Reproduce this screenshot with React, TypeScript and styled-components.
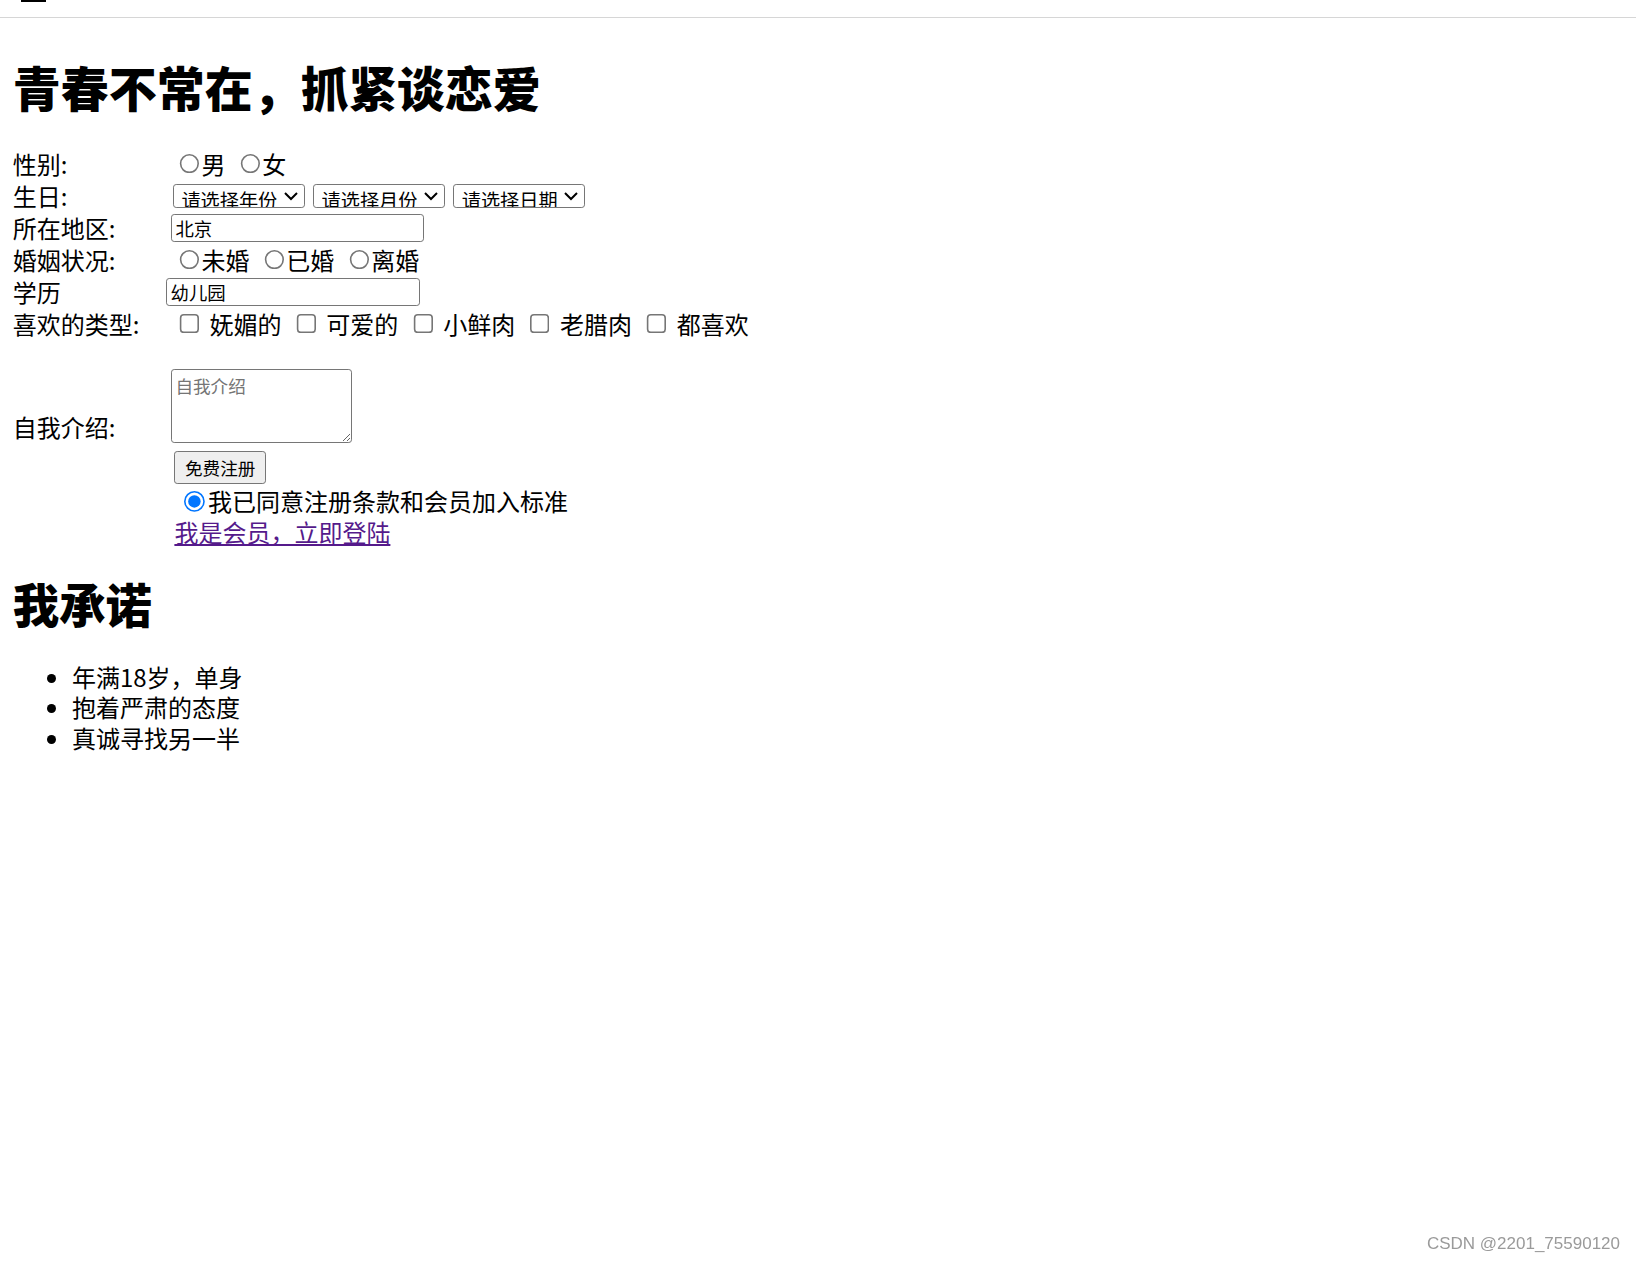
import styled, { createGlobalStyle } from "styled-components";

const GlobalStyle = createGlobalStyle`
  html, body { margin: 0; background: #fff; }
  body { font-family: "Noto Sans CJK SC", "Liberation Sans", sans-serif; color: #000; }
`;

export default function App() {
  return (
    <>
      <GlobalStyle />
      <Page>
        <TopBar />
        <Rule />
        <Title>青春不常在，抓紧谈恋爱</Title>
        <Form>
          <Row>
            <Label>性别:</Label>
            <Field>
              <input type="radio" name="sex" />男
              <input type="radio" name="sex" />女
            </Field>
          </Row>
          <Row>
            <Label>生日:</Label>
            <Field>
              <Select><option>请选择年份</option></Select>
              <Select><option>请选择月份</option></Select>
              <Select><option>请选择日期</option></Select>
            </Field>
          </Row>
          <Row>
            <Label>所在地区:</Label>
            <Field>
              <TextInput defaultValue="北京" />
            </Field>
          </Row>
          <Row>
            <Label>婚姻状况:</Label>
            <Field>
              <input type="radio" name="m" />未婚
              <input type="radio" name="m" />已婚
              <input type="radio" name="m" />离婚
            </Field>
          </Row>
          <Row>
            <Label>学历</Label>
            <Field $shift={-3}>
              <TextInput defaultValue="幼儿园" />
            </Field>
          </Row>
          <Row>
            <Label>喜欢的类型:</Label>
            <Field>
              {["妩媚的", "可爱的", "小鲜肉", "老腊肉", "都喜欢"].map((t) => (
                <Check key={t}>
                  <input type="checkbox" /> {t}
                </Check>
              ))}
            </Field>
          </Row>
          <IntroRow>
            <Label>自我介绍:</Label>
            <Field>
              <Intro placeholder="自我介绍" />
            </Field>
          </IntroRow>
          <ButtonRow>
            <Button>免费注册</Button>
          </ButtonRow>
          <Indented $pad={2}>
            <input type="radio" defaultChecked />我已同意注册条款和会员加入标准
          </Indented>
          <Indented>
            <Link href="#">我是会员，立即登陆</Link>
          </Indented>
        </Form>
        <SubTitle>我承诺</SubTitle>
        <List>
          <li>年满18岁，单身</li>
          <li>抱着严肃的态度</li>
          <li>真诚寻找另一半</li>
        </List>
      </Page>
      <Watermark>CSDN @2201_75590120</Watermark>
    </>
  );
}

const Page = styled.div`
  zoom: 1.6;
  padding: 0 8px 8px;
  font-size: 15px;
  line-height: 20px;
`;

const TopBar = styled.div`
  width: 16px;
  height: 1.5px;
  margin-left: 5px;
  background: #000;
`;

const Rule = styled.div`
  margin: 9px -8px 0;
  height: 1px;
  background: #d6d6d6;
`;

const Title = styled.h1`
  margin: 24px 0 20px;
  font-size: 30px;
  line-height: 37px;
  font-weight: 900;
`;

const Form = styled.div`
  display: flex;
  flex-direction: column;
`;

const Row = styled.div`
  display: flex;
  align-items: center;
  height: 20px;
`;

const Label = styled.div`
  width: 99px;
  flex: none;
`;

const Field = styled.div<{ $shift?: number }>`
  display: flex;
  align-items: center;
  margin-left: ${({ $shift = 0 }) => $shift}px;
  input[type="radio"] {
    margin: 0 1px 0 5px;
  }
  input[type="radio"]:not(:first-child) {
    margin-left: 9px;
  }
`;

const Select = styled.select`
  font-family: inherit;
  font-size: 12px;
  height: 15px;
  padding: 0 1px;
  margin-left: 1px;
  margin-right: 4px;
  border: 1px solid #767676;
  border-radius: 2px;
  background: #fff;
  line-height: 13px;
`;

const TextInput = styled.input`
  width: 153px;
  height: 16px;
  padding: 0 2px;
  font-family: inherit;
  font-size: 11.5px;
  border: 1px solid #767676;
  border-radius: 2px;
`;

const Check = styled.label`
  display: flex;
  align-items: center;
  margin-right: 4px;
  input {
    margin: 0 6px 0 5px;
  }
`;

const IntroRow = styled.div`
  display: flex;
  align-items: flex-end;
  margin-top: 18px;
`;

const Intro = styled.textarea`
  width: 108px;
  height: 41px;
  padding: 2px;
  font-family: "Liberation Serif", "Noto Sans CJK SC", serif;
  font-size: 11px;
  border: 1px solid #767676;
  border-radius: 2px;
`;

const Indented = styled.div<{ $pad?: number }>`
  display: flex;
  align-items: center;
  height: 19px;
  padding-left: ${({ $pad = 0 }) => 101 + $pad}px;
  input {
    margin: 0 2px 0 4px;
  }
`;

const ButtonRow = styled(Indented)`
  height: 21px;
  margin-top: 5px;
  margin-bottom: 1px;
`;

const Button = styled.button`
  height: 21px;
  padding: 0 6px;
  font-family: inherit;
  font-size: 11px;
  background: #efefef;
  border: 1px solid #767676;
  border-radius: 2px;
`;

const Link = styled.a`
  color: #551a8b;
`;

const SubTitle = styled.h2`
  margin: 18px 0 20px;
  font-size: 29px;
  line-height: 34px;
  font-weight: 900;
`;

const List = styled.ul`
  margin: 0;
  padding-left: 37px;
  line-height: 19px;
`;

const Watermark = styled.div`
  position: fixed;
  right: 16px;
  top: 1234px;
  font-family: "Liberation Sans", sans-serif;
  font-size: 17px;
  color: #9a9a9a;
`;
